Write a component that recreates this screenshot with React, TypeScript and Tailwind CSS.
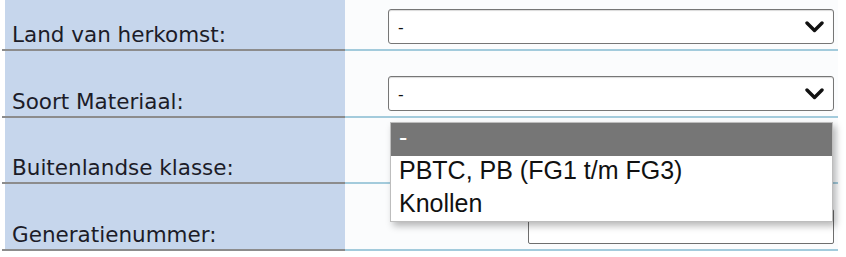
import React from "react";

const rows = [
  { label: "Land van herkomst:", h: "h-[51px]", value: "select" },
  { label: "Soort Materiaal:", h: "h-[67px]", value: "select" },
  { label: "Buitenlandse klasse:", h: "h-[66px]", value: "none" },
  { label: "Generatienummer:", h: "h-[67px]", value: "input" },
];

function Chevron() {
  return (
    <svg width="19" height="12" viewBox="0 0 19 12" className="shrink-0">
      <polyline
        points="2,2 9.5,9.5 17,2"
        fill="none"
        stroke="#111"
        strokeWidth="3.4"
        strokeLinecap="round"
        strokeLinejoin="round"
      />
    </svg>
  );
}

function FakeSelect() {
  return (
    <div className="w-[446px] h-[35px] mb-[5px] flex items-center justify-between pl-[9px] pr-[9px] bg-white border border-[#767676] rounded-[3px] shadow-[inset_0_1px_1px_rgba(0,0,0,0.15)]">
      <span className="text-[17px] text-[#111] pt-[2px]">-</span>
      <Chevron />
    </div>
  );
}

export default function App() {
  return (
    <div className="relative w-[846px] h-[257px] bg-white overflow-hidden" style={{ fontFamily: '"DejaVu Sans", Verdana, sans-serif' }}>
      <div className="ml-[2px] w-[836px] flex flex-col">
        {rows.map((r) => (
          <div key={r.label} className={`flex ${r.h}`}>
            {/* label cell */}
            <div className="w-[343px] pl-[3px] border-b-2 border-[#8c8c8c]">
              <div className="h-full bg-[#c6d6ec] flex items-end pl-[7px] pb-[4px]">
                <span className="text-[21.5px] leading-none text-[#1c1c28]">{r.label}</span>
              </div>
            </div>
            {/* value cell */}
            <div className="flex-1 bg-[#fbfcfd] border-b-2 border-[#a3cbdc] flex items-end pl-[43px]" style={{ fontFamily: '"Liberation Sans", Arial, sans-serif' }}>
              {r.value === "select" && <FakeSelect />}
              {r.value === "input" && (
                <div className="ml-[140px] w-[306px] h-[35px] mb-[5px] bg-white border-[1.5px] border-[#6e6e6e] rounded-[2px]" />
              )}
            </div>
          </div>
        ))}
      </div>

      {/* open dropdown list of "Soort Materiaal" */}
      <div
        className="absolute left-[390px] top-[122px] w-[443px] bg-white border border-[#bdbdbd] shadow-[3px_4px_7px_rgba(0,0,0,0.28)]"
        style={{ fontFamily: '"Liberation Sans", Arial, sans-serif' }}
      >
        <div className="h-[33px] bg-[#767676] text-white text-[25px] leading-[29px] pl-[8px]">-</div>
        <div className="h-[33px] text-[#111] text-[25px] leading-[29px] pl-[8px]">PBTC, PB (FG1 t/m FG3)</div>
        <div className="h-[32px] text-[#111] text-[25px] leading-[29px] pl-[8px]">Knollen</div>
      </div>
    </div>
  );
}
